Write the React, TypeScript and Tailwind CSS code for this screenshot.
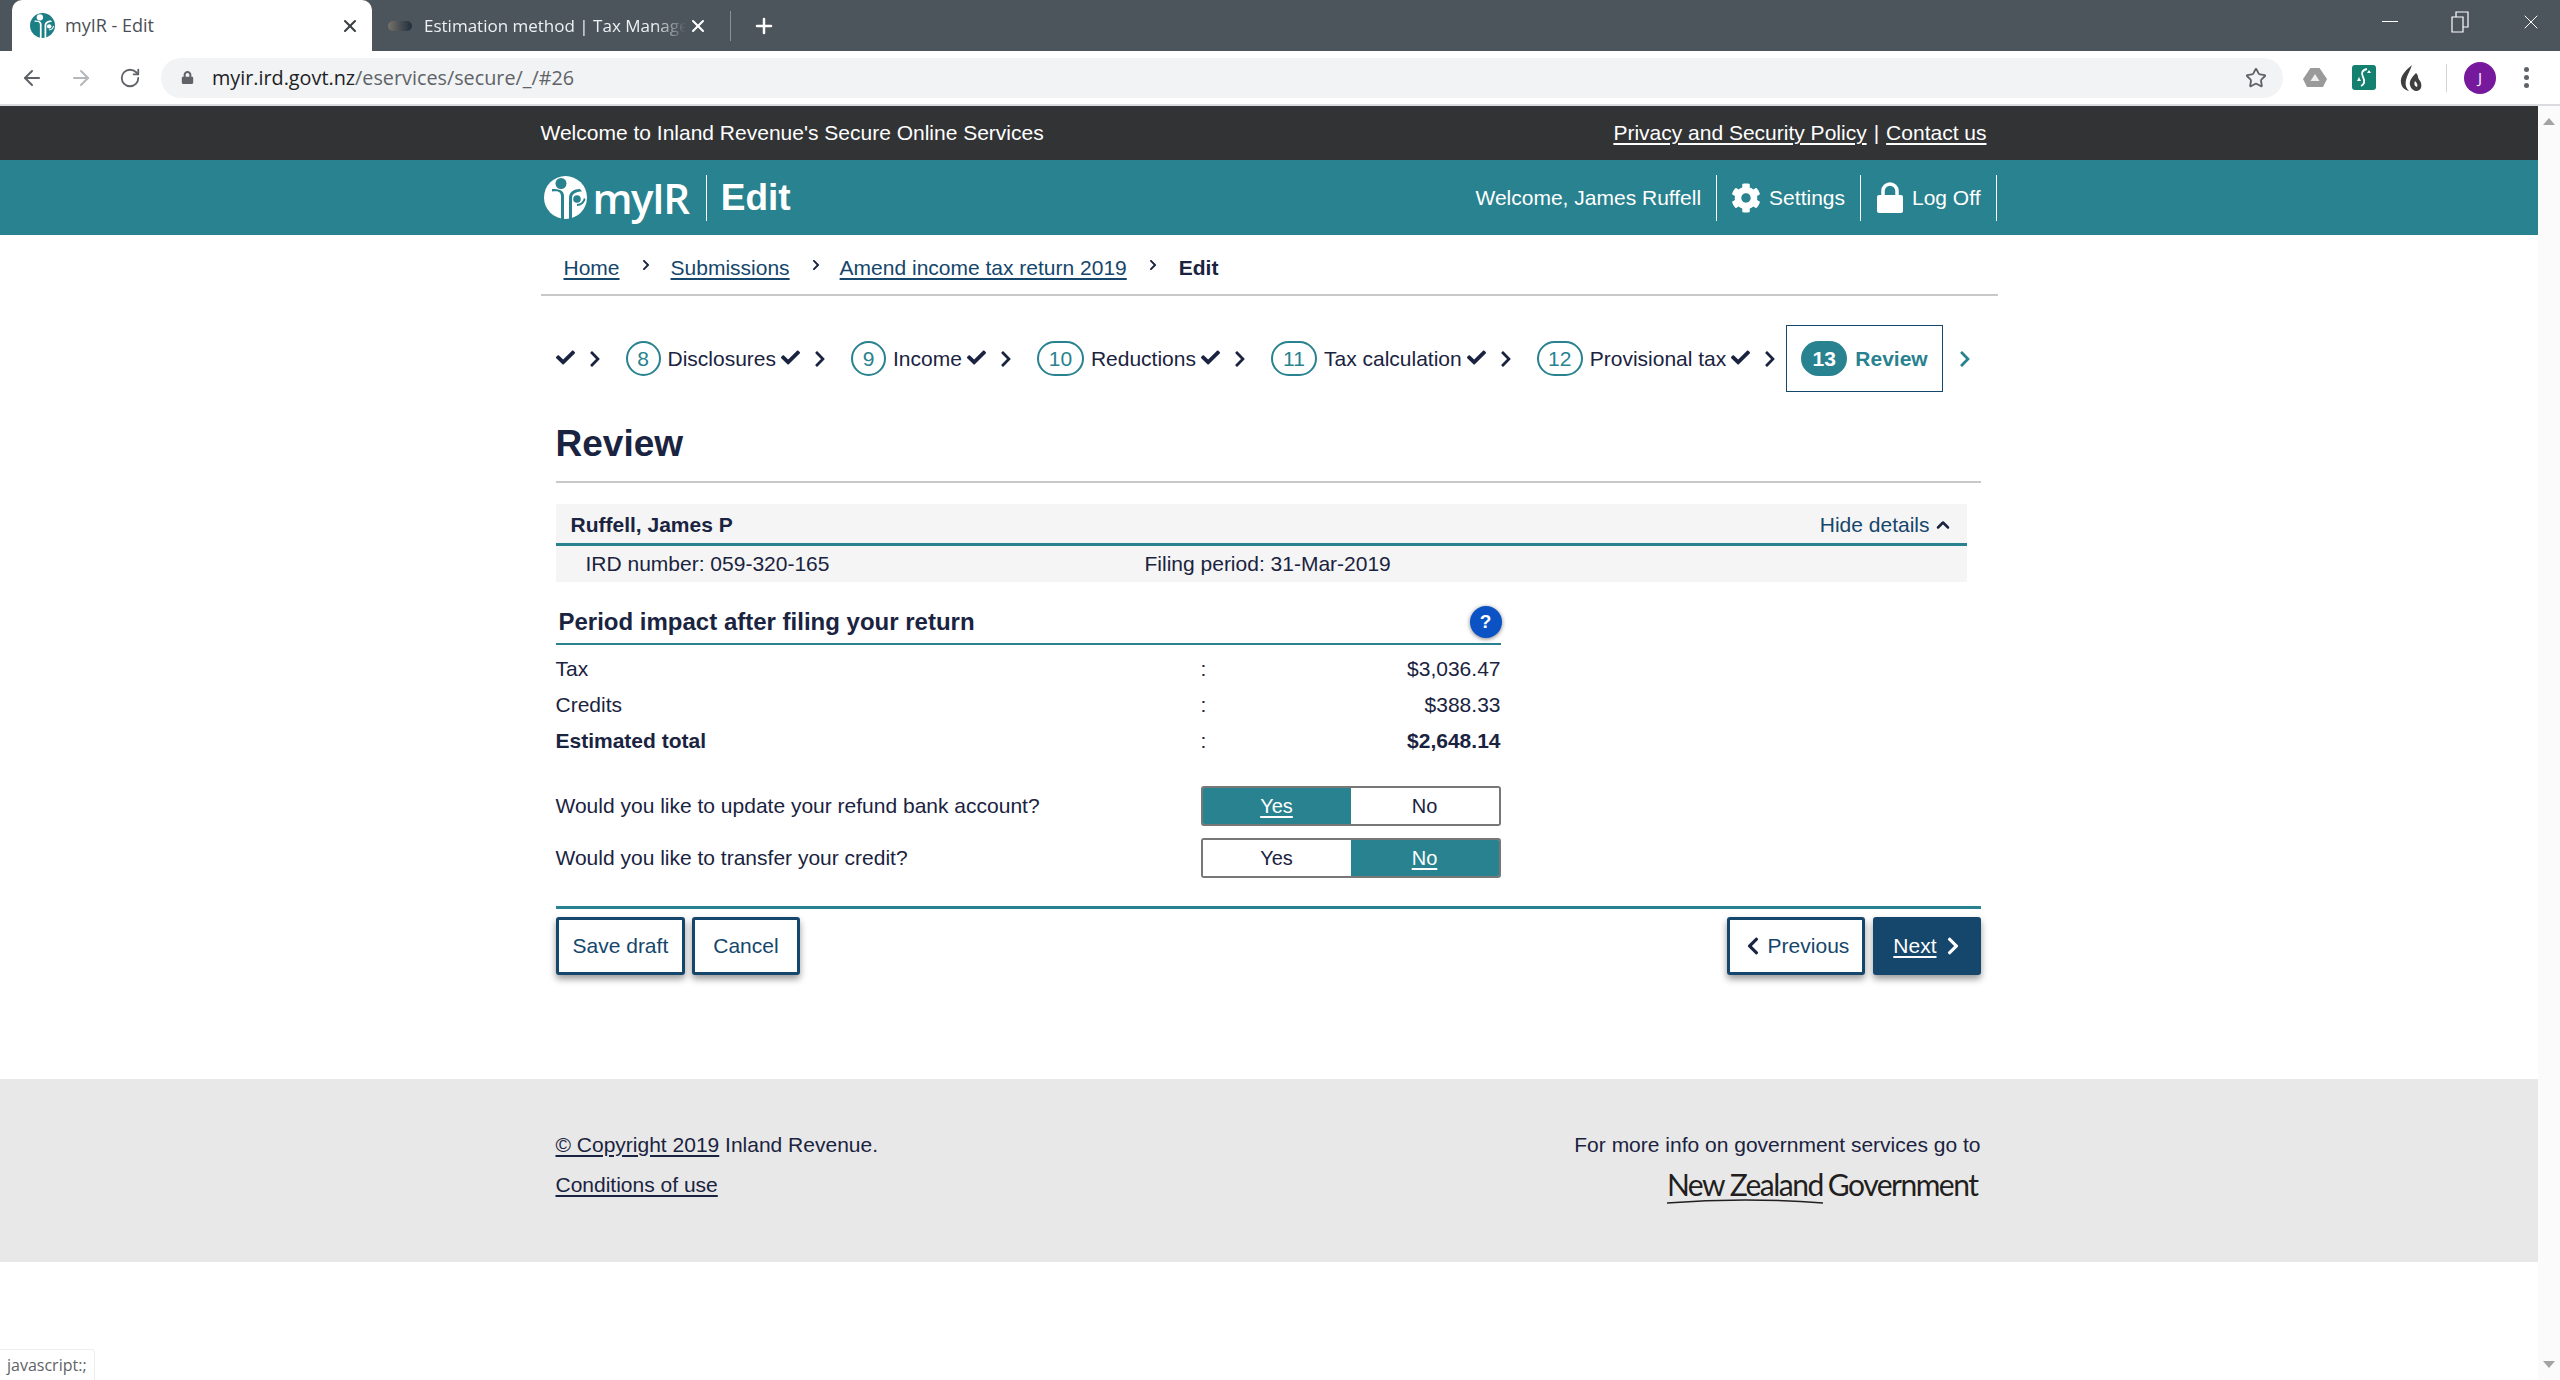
import { ArrowLeft, ArrowRight, ChevronUp, Plus, RotateCw, Star, X } from "lucide-react";
import { FaCheck, FaChevronLeft, FaChevronRight, FaCog, FaLock } from "react-icons/fa";

const STEPS = [
  { n: "8", label: "Disclosures", w: "w-[35px]" },
  { n: "9", label: "Income", w: "w-[35px]" },
  { n: "10", label: "Reductions", w: "w-[47px]" },
  { n: "11", label: "Tax calculation", w: "w-[46px]" },
  { n: "12", label: "Provisional tax", w: "w-[46px]" },
];

function IrLogo({ dark = false, size = 43 }: { dark?: boolean; size?: number }) {
  const fg = dark ? "#1d7f86" : "#ffffff";
  const bg = dark ? "#ffffff" : "#28828f";
  return (
    <svg width={size} height={size} viewBox="0 0 43 43" className="shrink-0">
      <circle cx="21.5" cy="21.5" r="21.5" fill={fg} />
      <circle cx="17" cy="7.5" r="5.5" fill={bg} />
      <path d="M8 15.5c6-1 9 0 9 5V43h3V20c0-6-5-7-12-7z" fill={bg} />
      <path d="M25 43V22c0-6 5-9 11-9l2 2.5c-6 0-10 2-10 7V43z" fill={bg} />
      <circle cx="33" cy="23" r="3.8" fill={bg} />
      <path d="M33 28c4 0 6-3 7-6l1.500 1c-1 4-4 7-8.500 7z" fill={bg} />
    </svg>
  );
}

function StepDone({ first = false }: { first?: boolean }) {
  return (
    <>
      <FaCheck className={`mb-[3px] text-[19px] text-[#1a2340] ${first ? "" : "ml-[5px]"}`} />
      <FaChevronRight className="ml-[11px] text-[18px] text-[#1a2340]" />
    </>
  );
}

function Crumb() {
  return <FaChevronRight className="mb-[5px] ml-[20px] text-[12px] text-[#1a2340]" />;
}

function Toggle({ active }: { active: "Yes" | "No" }) {
  return (
    <div className="flex h-[40px] w-[300px] overflow-hidden rounded-[3px] border-2 border-[#777] text-[20px]">
      {(["Yes", "No"] as const).map((v) => (
        <div
          key={v}
          className={
            v === active
              ? "flex flex-1 items-center justify-center bg-[#28828f] text-white underline underline-offset-[3px]"
              : "flex flex-1 items-center justify-center bg-white text-[#1a2340]"
          }
        >
          {v}
        </div>
      ))}
    </div>
  );
}

function OutlineButton({ children, px }: { children: React.ReactNode; px: string }) {
  return (
    <button
      type="button"
      className={`flex h-[58px] items-center rounded-[3px] border-[3px] border-[#15466b] bg-white text-[21px] text-[#15466b] shadow-[0_4px_7px_rgba(0,0,0,0.4)] ${px}`}
    >
      {children}
    </button>
  );
}

export default function App() {
  return (
    <div className="relative flex h-[1380px] w-full flex-col overflow-hidden bg-white font-['Liberation_Sans',Arial,sans-serif] text-[#1a2340]">
      {/* Browser tab strip */}
      <div className="flex h-[51px] shrink-0 items-center bg-[#4d555c] pl-[12px] font-['Open_Sans',sans-serif] text-white">
        <div className="flex h-full w-[360px] items-center rounded-t-[10px] bg-white pl-[18px] pr-[12px] text-[#4a4f55]">
          <IrLogo dark size={25} />
          <span className="ml-[10px] flex-1 text-[18px]">myIR - Edit</span>
          <X size={20} strokeWidth={2.5} className="text-[#3c4043]" />
        </div>
        <div className="flex h-full w-[358px] items-center pl-[16px] pr-[12px]">
          <div className="h-[10px] w-[24px] shrink-0 rounded-full bg-gradient-to-r from-[#77726a] to-[#1f2f3d]" />
          <span className="ml-[12px] w-[262px] overflow-hidden whitespace-nowrap text-[17px] text-[#eef0f1] [mask-image:linear-gradient(to_right,black_88%,transparent)]">
            Estimation method | Tax Manager
          </span>
          <X size={20} strokeWidth={2.5} className="ml-[2px]" />
        </div>
        <div className="h-[30px] w-px bg-[#8a9096]" />
        <Plus size={24} strokeWidth={2.5} className="ml-[21px]" />
        <div className="ml-auto flex items-center gap-[50px] pb-[8px] pr-[17px]">
          <div className="mr-[3px] h-px w-[16px] bg-white" />
          <svg width="18" height="24" viewBox="0 0 18 24" fill="none" stroke="#fff" strokeWidth="1.2">
            <path d="M1 7h11v15H1zM5 7V2h12v15h-5" />
          </svg>
          <X size={24} strokeWidth={1} />
        </div>
      </div>

      {/* Browser toolbar */}
      <div className="flex h-[55px] shrink-0 items-center border-b-2 border-[#dadce0] bg-white pl-[20px] pr-[31px]">
        <ArrowLeft size={24} className="text-[#5f6368]" />
        <ArrowRight size={24} className="ml-[25px] text-[#b4b7bb]" />
        <RotateCw size={22} className="ml-[26px] text-[#5f6368]" />
        <div className="ml-[20px] flex h-[40px] flex-1 items-center rounded-full bg-[#f1f3f4] pl-[20px] pr-[16px] font-['Open_Sans',sans-serif] text-[19.8px]">
          <FaLock className="text-[13px] text-[#5f6368]" />
          <span className="ml-[18px] text-[#202124]">myir.ird.govt.nz</span>
          <span className="text-[#5f6368]">/eservices/secure/_/#26</span>
          <Star size={22} strokeWidth={2} className="ml-auto text-[#5f6368]" />
        </div>
        <svg width="24" height="22" viewBox="0 0 24 22" className="ml-[20px]">
          <path d="M7.500 1h9l7.500 11-4 8H4l-4-8z" fill="#9a9a9a" />
          <path d="M12 7l4.500 7h-9z" fill="#eee" />
        </svg>
        <svg width="24" height="25" viewBox="0 0 24 25" className="ml-[25px] rounded-[3px] bg-[#14806f]">
          <path d="M15 4c-5 1-6 4-4 8s2 7-2 9" fill="none" stroke="#fff" strokeWidth="1.8" />
          <path d="M7 12l2 4H5zM17 5l2 3h-4z" fill="#fff" />
        </svg>
        <svg width="24" height="28" viewBox="0 0 24 28" className="ml-[23px]">
          <path d="M13 1C6 7 1 12 2 19c1 5 4 7 8 8-3-3-4-6-3-11 1-5 4-9 6-15z" fill="#3f3f3f" />
          <path d="M17 9c-4 4-7 8-6 12 1 4 4 6 7 6 4-1 5-4 4-8-1-3-3-4-3-6s-1-3-2-4z" fill="#3f3f3f" />
          <path d="M16 17c-1 2-1 5 2 6 1-2 0-4-2-6z" fill="#fff" />
        </svg>
        <div className="ml-[23px] h-[28px] w-px bg-[#d0d2d4]" />
        <div className="ml-[17px] flex h-[32px] w-[32px] items-center justify-center rounded-full bg-[#76199c] font-['Open_Sans',sans-serif] text-[15px] text-white">
          J
        </div>
        <div className="ml-[28px] flex flex-col gap-[3px]">
          <span className="h-[5px] w-[5px] rounded-full bg-[#5f6368]" />
          <span className="h-[5px] w-[5px] rounded-full bg-[#5f6368]" />
          <span className="h-[5px] w-[5px] rounded-full bg-[#5f6368]" />
        </div>
      </div>

      <div className="flex min-h-0 flex-1">
        <div className="min-w-0 flex-1">
          {/* Top strip */}
          <div className="bg-[#323335] text-white">
            <div className="mx-auto flex h-[54px] w-[1457px] items-center justify-between pr-[11px] text-[21px]">
              <span>Welcome to Inland Revenue's Secure Online Services</span>
              <span>
                <a className="underline underline-offset-[3px]">Privacy and Security Policy</a>
                <span className="mx-[7px]">|</span>
                <a className="underline underline-offset-[3px]">Contact us</a>
              </span>
            </div>
          </div>

          {/* Teal header */}
          <div className="bg-[#28828f] text-white">
            <div className="mx-auto flex h-[75px] w-[1457px] items-center pl-[3px] pr-[1px]">
              <IrLogo />
              <span className="ml-[6px] font-['Open_Sans',sans-serif] text-[42px] font-semibold leading-none tracking-[-1.5px]">
                myIR
              </span>
              <div className="ml-[17px] h-[46px] w-px bg-white" />
              <span className="ml-[14px] text-[37px] font-bold leading-none">Edit</span>
              <span className="ml-auto text-[21px]">Welcome, James Ruffell</span>
              <div className="ml-[15px] h-[46px] w-px bg-white" />
              <FaCog className="ml-[14px] text-[30px]" />
              <span className="ml-[8px] text-[21px]">Settings</span>
              <div className="ml-[15px] h-[46px] w-px bg-white" />
              <svg width="26" height="31" viewBox="0 0 26 31" className="ml-[16px]">
                <path d="M6 15V9a7 7 0 0 1 14 0v6" fill="none" stroke="#fff" strokeWidth="3.500" />
                <rect x="0" y="13" width="26" height="18" rx="2" fill="#fff" />
              </svg>
              <span className="ml-[9px] text-[21px]">Log Off</span>
              <div className="ml-[15px] h-[46px] w-px bg-white" />
            </div>
          </div>

          <div className="mx-auto w-[1457px]">
            {/* Breadcrumb */}
            <div className="flex h-[61px] items-center border-b-2 border-[#c8c8c8] pl-[23px] pt-[6px] text-[21px] text-[#15466b]">
              <a className="underline underline-offset-[3px]">Home</a>
              <Crumb />
              <a className="ml-[19px] underline underline-offset-[3px]">Submissions</a>
              <Crumb />
              <a className="ml-[18px] underline underline-offset-[3px]">Amend income tax return 2019</a>
              <Crumb />
              <span className="ml-[20px] font-bold text-[#1a2340]">Edit</span>
            </div>

            <div className="pl-[15px] pr-[17px]">
              {/* Stepper */}
              <div className="mt-[29px] flex h-[67px] items-center gap-[22px] text-[21px]">
                <div className="flex items-center">
                  <StepDone first />
                </div>
                {STEPS.map((s) => (
                  <div key={s.n} className="flex items-center">
                    <div
                      className={`flex h-[35px] items-center justify-center rounded-full border-2 border-[#28828f] text-[#28828f] ${s.w}`}
                    >
                      {s.n}
                    </div>
                    <span className="ml-[7px] whitespace-nowrap">{s.label}</span>
                    <StepDone />
                  </div>
                ))}
                <div className="-ml-[15px] flex h-[67px] items-center border border-[#15466b] px-[14px] font-bold text-[#28828f]">
                  <div className="flex h-[35px] w-[46px] items-center justify-center rounded-full bg-[#28828f] text-white">
                    13
                  </div>
                  <span className="ml-[8px]">Review</span>
                </div>
                <FaChevronRight className="-ml-[9px] text-[18px] text-[#28828f]" />
              </div>

              {/* Title */}
              <h1 className="mt-[31px] border-b-2 border-[#c8c8c8] pb-[16px] text-[37px] font-bold leading-[42px]">
                Review
              </h1>

              {/* Summary panel */}
              <div className="mt-[21px] w-[1411px] bg-[#f5f5f5] text-[21px]">
                <div className="flex h-[42px] items-center justify-between border-b-[3px] border-[#28828f] pl-[15px] pr-[14px] pt-[2px]">
                  <span className="font-bold">Ruffell, James P</span>
                  <span className="flex items-center text-[#15466b]">
                    Hide details
                    <ChevronUp size={20} strokeWidth={3} className="ml-[3px] text-[#1a2340]" />
                  </span>
                </div>
                <div className="flex h-[36px] items-center pl-[30px]">
                  <span className="w-[559px]">IRD number: 059-320-165</span>
                  <span>Filing period: 31-Mar-2019</span>
                </div>
              </div>

              {/* Period impact */}
              <div className="mt-[22px] w-[945px] text-[21px]">
                <div className="flex h-[41px] items-center justify-between border-b-2 border-[#28828f] pb-[3px] pl-[3px]">
                  <h2 className="text-[24px] font-bold">Period impact after filing your return</h2>
                  <div className="mr-[-1px] flex h-[32px] w-[32px] items-center justify-center rounded-full bg-[#0b52c4] text-[19px] font-bold text-white shadow-[0_1px_4px_rgba(0,0,0,0.5)]">
                    ?
                  </div>
                </div>
                <div className="mt-[6px] grid grid-cols-[645px_1fr_auto] [&>*]:flex [&>*]:h-[36px] [&>*]:items-center">
                  <span>Tax</span>
                  <span>:</span>
                  <span>$3,036.47</span>
                  <span>Credits</span>
                  <span>:</span>
                  <span className="justify-end">$388.33</span>
                  <span className="font-bold">Estimated total</span>
                  <span>:</span>
                  <span className="font-bold">$2,648.14</span>
                </div>
                <div className="mt-[27px] flex flex-col gap-[12px]">
                  <div className="flex items-center">
                    <span className="w-[645px]">Would you like to update your refund bank account?</span>
                    <Toggle active="Yes" />
                  </div>
                  <div className="flex items-center">
                    <span className="w-[645px]">Would you like to transfer your credit?</span>
                    <Toggle active="No" />
                  </div>
                </div>
              </div>

              {/* Form actions */}
              <div className="mt-[28px] flex justify-between border-t-[3px] border-[#28828f] pt-[8px]">
                <div className="flex gap-[7px]">
                  <OutlineButton px="px-[14px]">Save draft</OutlineButton>
                  <OutlineButton px="px-[18px]">Cancel</OutlineButton>
                </div>
                <div className="flex gap-[8px]">
                  <OutlineButton px="px-[13px]">
                    <FaChevronLeft className="mr-[5px] text-[20px] text-[#1a2340]" />
                    Previous
                  </OutlineButton>
                  <button
                    type="button"
                    className="flex h-[58px] items-center rounded-[3px] bg-[#15466b] pl-[20px] pr-[18px] text-[21px] text-white shadow-[0_4px_7px_rgba(0,0,0,0.4)]"
                  >
                    <span className="underline underline-offset-[3px]">Next</span>
                    <FaChevronRight className="ml-[6px] text-[20px]" />
                  </button>
                </div>
              </div>
            </div>
          </div>

          {/* Footer */}
          <div className="mt-[104px] bg-[#e8e8e8]">
            <div className="mx-auto flex h-[183px] w-[1457px] justify-between pl-[15px] pr-[17px] pt-[50px] text-[21px]">
              <div className="flex flex-col gap-[8px]">
                <p>
                  <a className="underline underline-offset-[3px]">© Copyright 2019</a> Inland Revenue.
                </p>
                <a className="underline underline-offset-[3px]">Conditions of use</a>
              </div>
              <div className="flex flex-col items-end">
                <p>For more info on government services go to</p>
                <div className="relative mr-[3px] mt-[5px] flex font-['Lato',sans-serif] text-[30px] leading-[36px] tracking-[-1.5px] text-[#231f20]">
                  <span>New Zealand</span>
                  <span className="ml-[5px]">Government</span>
                  <svg width="156" height="6" viewBox="0 0 156 6" className="absolute left-0 top-[32px]">
                    <path d="M0 5Q78-1 156 5" fill="none" stroke="#231f20" strokeWidth="1.500" />
                  </svg>
                </div>
              </div>
            </div>
          </div>
        </div>

        {/* Scrollbar */}
        <div className="flex w-[22px] shrink-0 flex-col items-center justify-between bg-[#fbfbfb] py-[12px]">
          <div className="h-0 w-0 border-x-[6px] border-b-[7px] border-x-transparent border-b-[#a3a3a3]" />
          <div className="h-0 w-0 border-x-[6px] border-t-[7px] border-x-transparent border-t-[#a3a3a3]" />
        </div>
      </div>

      {/* Link status bubble */}
      <div className="absolute bottom-0 left-0 flex h-[31px] items-center rounded-tr-[4px] border-r border-t border-[#eeeeee] bg-white px-[7px] font-['Open_Sans',sans-serif] text-[16px] text-[#5f6368]">
        javascript:;
      </div>
    </div>
  );
}
